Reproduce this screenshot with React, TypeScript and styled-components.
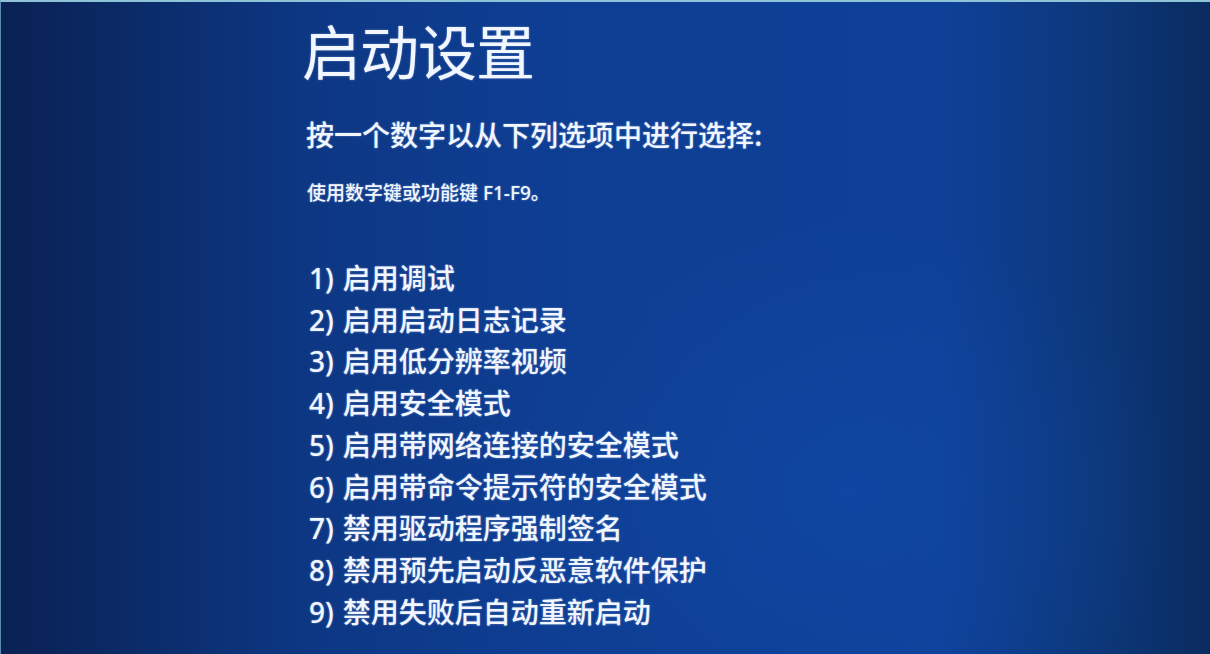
import React from "react"
import styled, { createGlobalStyle } from "styled-components"

const GlobalStyle = createGlobalStyle`
  html, body {
    margin: 0;
    padding: 0;
    width: 100%;
    height: 100%;
    overflow: hidden;
  }
  body {
    font-family: "Noto Sans", "Noto Sans CJK SC", sans-serif;
  }
`

const options = [
  "启用调试",
  "启用启动日志记录",
  "启用低分辨率视频",
  "启用安全模式",
  "启用带网络连接的安全模式",
  "启用带命令提示符的安全模式",
  "禁用驱动程序强制签名",
  "禁用预先启动反恶意软件保护",
  "禁用失败后自动重新启动",
]

export default function App() {
  return (
    <>
      <GlobalStyle />
      <S.Screen>
        <S.Content>
          <S.Title>启动设置</S.Title>
          <S.Prompt>按一个数字以从下列选项中进行选择:</S.Prompt>
          <S.Hint>使用数字键或功能键 F1-F9。</S.Hint>
          <S.OptionList>
            {options.map((label, i) => (
              <S.Option key={label}>
                <S.Num>{i + 1})</S.Num>
                {label}
              </S.Option>
            ))}
          </S.OptionList>
        </S.Content>
      </S.Screen>
    </>
  )
}

const S = {
  Screen: styled.div`
    width: 1210px;
    height: 654px;
    box-sizing: border-box;
    border-top: 2px solid #8fc4d8;
    border-left: 1px solid #5b8db0;
    background:
      radial-gradient(ellipse 40% 60% at 70% 75%, rgba(20, 85, 185, 0.3), rgba(20, 85, 185, 0) 70%),
      linear-gradient(90deg, #0a2153 0%, #0b2a66 10%, #0d3783 25%, #0e3e93 45%, #0e4098 78%, #0c3676 92%, #0a2b5f 100%);
    color: #f2f6ff;
  `,
  Content: styled.div`
    display: flex;
    flex-direction: column;
    align-items: flex-start;
    padding: 8px 0 0 301px;
    text-shadow: 0 0 2px rgba(190, 215, 255, 0.55);
  `,
  Title: styled.h1`
    margin: 0;
    font-family: "Noto Sans CJK SC", sans-serif;
    font-size: 59px;
    font-weight: 400;
    line-height: 80px;
    letter-spacing: -1px;
  `,
  Prompt: styled.div`
    margin-top: 26px;
    font-family: "Noto Sans CJK SC", sans-serif;
    font-size: 28px;
    font-weight: 500;
    line-height: 36px;
    padding-left: 4px;
  `,
  Hint: styled.div`
    margin-top: 28px;
    font-size: 19px;
    font-weight: 500;
    line-height: 26px;
    padding-left: 5px;
  `,
  OptionList: styled.ol`
    list-style: none;
    margin: 52px 0 0;
    padding: 0 0 0 7px;
    display: flex;
    flex-direction: column;
  `,
  Option: styled.li`
    display: flex;
    align-items: baseline;
    font-size: 28px;
    font-weight: 500;
    line-height: 41.7px;
  `,
  Num: styled.span`
    margin-right: 9px;
  `,
}
